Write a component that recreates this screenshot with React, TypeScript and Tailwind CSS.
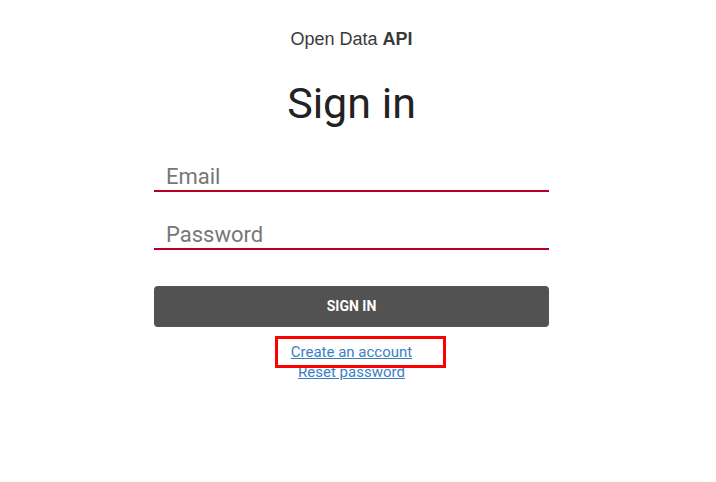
export default function App() {
  return (
    <div className="min-h-screen bg-white flex flex-col items-center pt-[28px] pr-[13px]" style={{ fontFamily: "Roboto, sans-serif" }}>
      <div className="text-[18px] leading-[22px] text-[#3a3a3a]" style={{ fontFamily: "'Liberation Sans', Arial, sans-serif" }}>
        Open Data <span className="font-bold">API</span>
      </div>
      <h1 className="mt-[27px] text-[43px] leading-[52px] text-[#222]">Sign in</h1>
      <form className="w-[395px] mt-[33px] flex flex-col">
        <input
          type="email"
          placeholder="Email"
          className="h-[30px] px-[12px] text-[22px] text-[#333] placeholder:text-[#777] border-b-2 border-[#b5001f] outline-none"
        />
        <input
          type="password"
          placeholder="Password"
          className="mt-[28px] h-[30px] px-[12px] text-[22px] text-[#333] placeholder:text-[#777] border-b-2 border-[#b5001f] outline-none"
        />
        <button
          type="button"
          className="mt-[36px] h-[41px] rounded-[4px] bg-[#525252] text-white text-[14px] font-bold"
        >
          SIGN IN
        </button>
        <div className="mt-[15px] flex flex-col items-center text-[15px] leading-[20px]">
          <div className="relative">
            <a href="#" className="text-[#3a7fc6] underline">Create an account</a>
            <div className="absolute left-[-16px] right-[-34px] top-[-6px] bottom-[-6px] border-[3px] border-[#ff0000]" />
          </div>
          <a href="#" className="text-[#3a7fc6] underline">Reset password</a>
        </div>
      </form>
    </div>
  );
}
